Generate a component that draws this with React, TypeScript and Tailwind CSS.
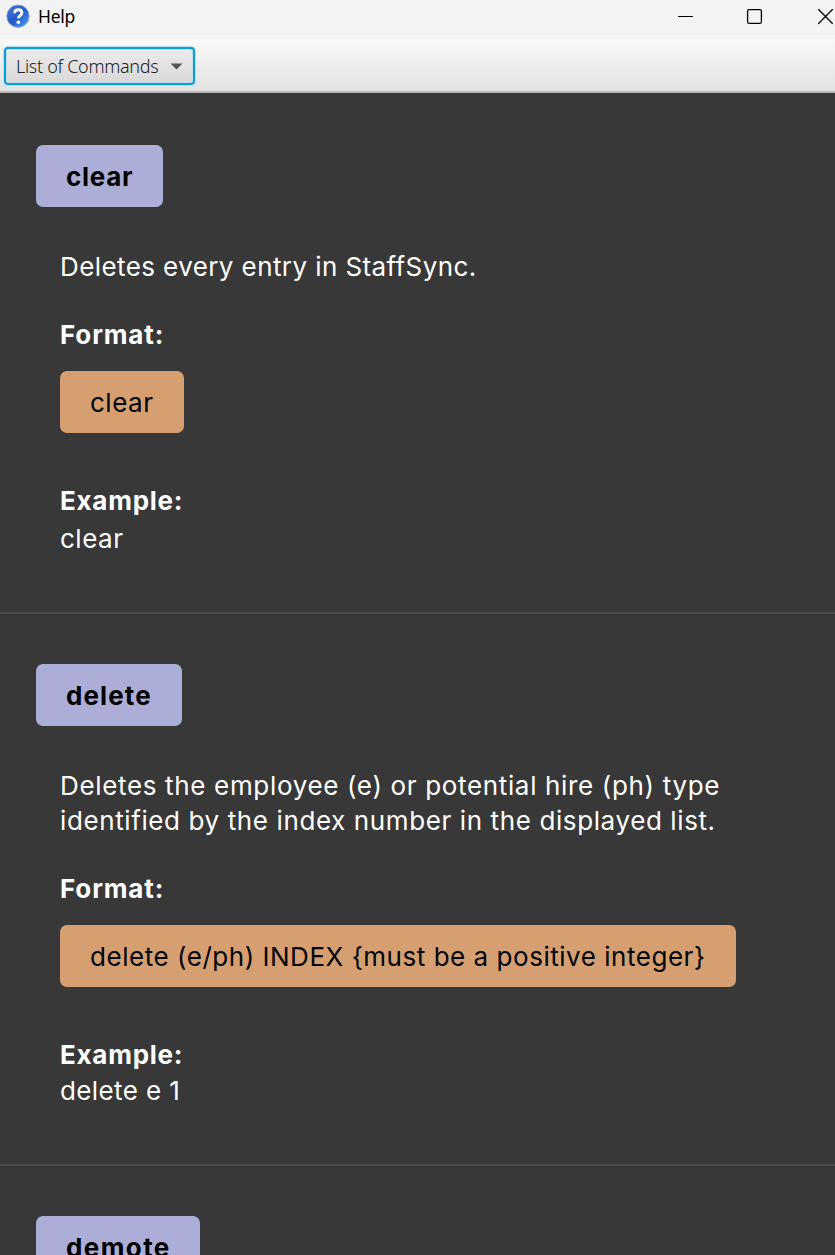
import type { ReactNode } from "react";

type Command = {
  name: string;
  nameBox: string;
  nameText: string;
  lines: { text: string; spacing: string }[];
  format: string;
  formatBox: string;
  formatText: string;
  example: string;
  exampleText: string;
};

const commands: Command[] = [
  {
    name: "clear",
    nameBox: "w-[127px]",
    nameText: "tracking-[0.7px]",
    lines: [{ text: "Deletes every entry in StaffSync.", spacing: "tracking-[0.41px]" }],
    format: "clear",
    formatBox: "w-[124px]",
    formatText: "tracking-[0.5px]",
    example: "clear",
    exampleText: "mt-[3px] tracking-[0.5px]",
  },
  {
    name: "delete",
    nameBox: "w-[146px]",
    nameText: "tracking-[1.1px]",
    lines: [
      { text: "Deletes the employee (e) or potential hire (ph) type", spacing: "tracking-[0.66px]" },
      { text: "identified by the index number in the displayed list.", spacing: "tracking-[0.61px]" },
    ],
    format: "delete (e/ph) INDEX {must be a positive integer}",
    formatBox: "w-[676px]",
    formatText: "tracking-[0.53px]",
    example: "delete e 1",
    exampleText: "mt-px tracking-[0.38px]",
  },
];

function NameTag({ box, text, children }: { box: string; text: string; children: ReactNode }) {
  return (
    <div className={`flex h-[62px] items-center rounded-[7px] bg-[#adaed8] pl-[30px] font-bold text-black ${box}`}>
      <span className={text}>{children}</span>
    </div>
  );
}

function CommandEntry({ command }: { command: Command }) {
  return (
    <section className="border-b-2 border-[#4a4a4a] pt-[50px] pb-[56px] pl-9">
      <NameTag box={command.nameBox} text={command.nameText}>{command.name}</NameTag>
      <div className="pl-6">
        <div className="mt-[42px]">
          {command.lines.map((line) => (
            <p key={line.text} className={line.spacing}>{line.text}</p>
          ))}
        </div>
        <h3 className="mt-[33px] font-bold tracking-[0.85px]">Format:</h3>
        <div className={`mt-[19px] flex h-[62px] items-center rounded-[7px] bg-[#d69f72] pl-[30px] text-black ${command.formatBox}`}>
          <span className={command.formatText}>{command.format}</span>
        </div>
        <h3 className="mt-[50px] font-bold tracking-[0.75px]">Example:</h3>
        <p className={command.exampleText}>{command.example}</p>
      </div>
    </section>
  );
}

function HelpIcon() {
  return (
    <svg width="24" height="24" viewBox="0 0 24 24">
      <defs>
        <linearGradient id="help-ball" x1="0" y1="0" x2="1" y2="1">
          <stop offset="0" stopColor="#4a7cdc" />
          <stop offset="0.5" stopColor="#2159cc" />
          <stop offset="1" stopColor="#55a5f8" />
        </linearGradient>
      </defs>
      <circle cx="12" cy="12.2" r="11.2" fill="url(#help-ball)" stroke="#8fa3c8" strokeWidth="0.8" />
      <path d="M8.6 9.2C8.7 6.9 10.2 5.7 12.2 5.7c2.2 0 3.7 1.1 3.7 3 0 2.7-3.5 2.7-3.5 5.6" fill="none" stroke="#fff" strokeWidth="2.9" />
      <circle cx="12.3" cy="18.2" r="1.8" fill="#fff" />
    </svg>
  );
}

export default function App() {
  return (
    <div className="flex h-[1255px] w-[835px] flex-col overflow-hidden bg-[#383838]">
      <header className="flex h-[39px] shrink-0 items-start overflow-hidden bg-[#f3f3f3] pt-1 pl-1.5 font-['Noto_Sans','Open_Sans',sans-serif] text-black">
        <HelpIcon />
        <h1 className="ml-2 h-6 text-[17.5px] leading-[25px] tracking-[-0.3px]">Help</h1>
        <svg className="ml-auto shrink-0" width="160" height="26" viewBox="675 4 160 26" fill="none" stroke="#000">
          <path d="M678 16.5h15" strokeWidth="1" />
          <rect x="747.6" y="9.6" width="13.8" height="13.8" rx="1.5" strokeWidth="1.3" />
          <path d="M818.3 9.3l14.4 14.4M832.7 9.3l-14.4 14.4" strokeWidth="1.3" />
        </svg>
      </header>
      <div className="flex h-[54px] shrink-0 border-b-2 border-[#b8b8b8] bg-linear-to-b from-[#f9f9f9] to-[#e2e2e2] pt-2 pl-1">
        <button className="flex h-[38px] w-[191px] items-center rounded-[4px] border-2 border-[#0a9fd8] bg-linear-to-b from-[#ececec] to-[#d8d8d8] pl-[10px] font-['Noto_Sans','Open_Sans',sans-serif] text-[18px] leading-6 font-light text-[#222] shadow-[0_0_0_1px_#b9dfee,inset_0_0_0_1px_#c2dfea]">
          <span className="whitespace-nowrap tracking-[-0.3px]">List of Commands</span>
          <svg className="mr-[10px] ml-auto shrink-0" width="13" height="7" viewBox="0 0 13 7">
            <path d="M0.5 0.5h12l-6 6z" fill="#555" />
          </svg>
        </button>
      </div>
      <main className="flex-1 overflow-hidden font-['Inter',sans-serif] text-[26px] leading-[35px] whitespace-nowrap text-white">
        <div className="pt-0.5">
          {commands.map((command) => (
            <CommandEntry key={command.name} command={command} />
          ))}
          <div className="pt-[50px] pl-9">
            <NameTag box="w-[164px]" text="tracking-[1.4px]">demote</NameTag>
          </div>
        </div>
      </main>
    </div>
  );
}
